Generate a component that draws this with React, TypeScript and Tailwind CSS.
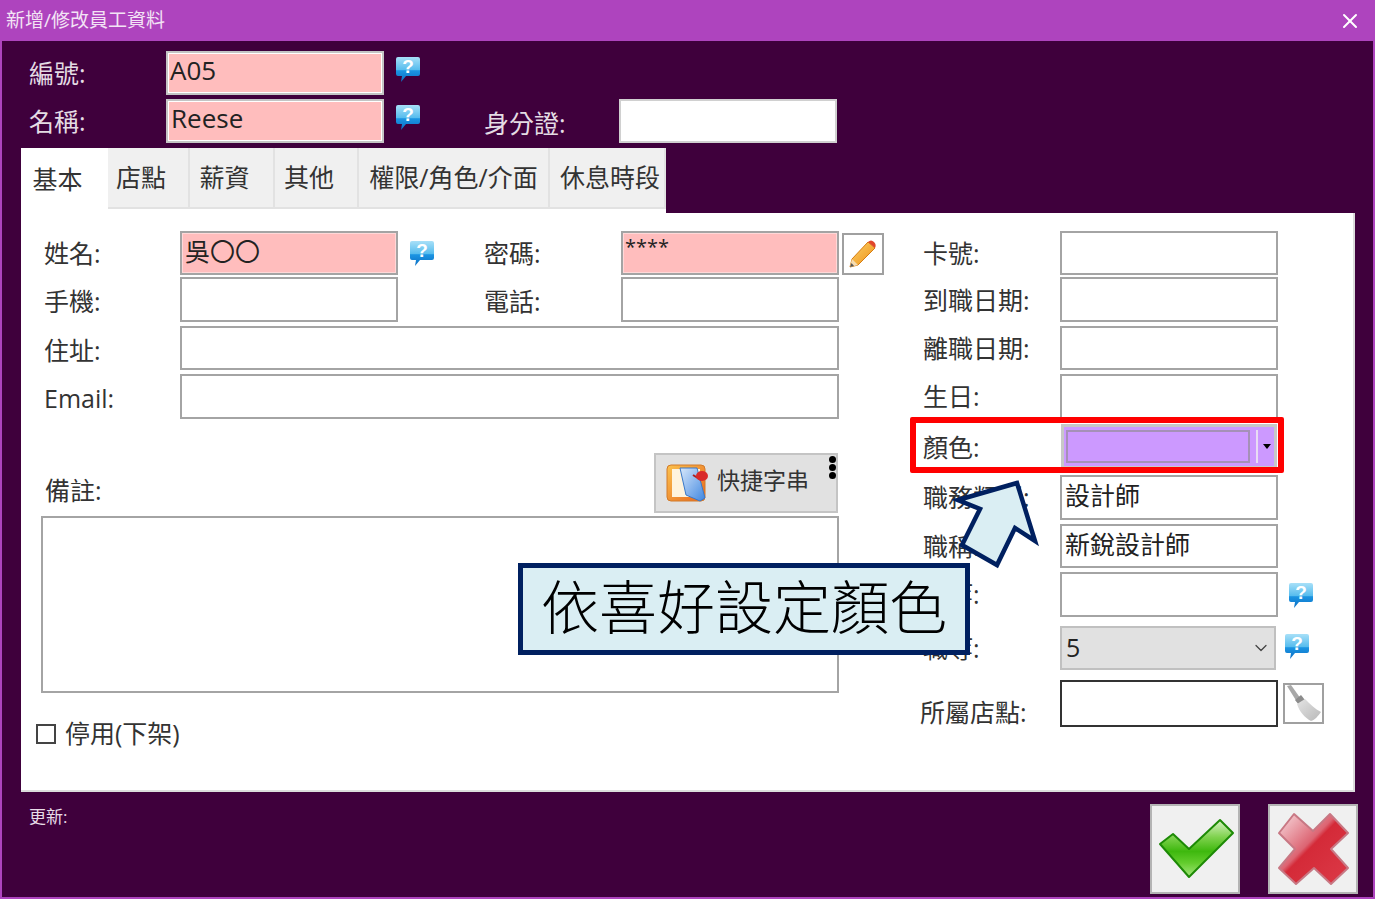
import { ChevronDown, X } from 'lucide-react'

const labelFont = "[font-family:'Open_Sans','Noto_Sans_CJK_TC',sans-serif]"

function HelpIcon({ id, className = '' }: { id: string; className?: string }) {
  return (
    <svg width="28" height="28" viewBox="0 0 28 28" className={`shrink-0 ${className}`}>
      <defs>
        <linearGradient id={id} x1="0" y1="0" x2="0" y2="1">
          <stop offset="0" stopColor="#a8e0f8" />
          <stop offset="0.5" stopColor="#58bdee" />
          <stop offset="0.55" stopColor="#1b94e2" />
          <stop offset="1" stopColor="#0b6fc4" />
        </linearGradient>
      </defs>
      <path d="M4 2h20a2 2 0 0 1 2 2v15a2 2 0 0 1-2 2H12l-5 6 1-6H4a2 2 0 0 1-2-2V4a2 2 0 0 1 2-2z" fill={`url(#${id})`} />
      <text x="14" y="18" textAnchor="middle" fontSize="19" fontWeight="700" fill="#fff" fontFamily="Liberation Sans">?</text>
    </svg>
  )
}

function Field({ value = '', pink, w = 'w-[218px]', dark }: { value?: string; pink?: boolean; w?: string; dark?: boolean }) {
  return (
    <div
      className={`${w} h-full shrink-0 flex items-center px-[3px] pb-[4px] border-2 text-[25px] leading-none text-[#222] ${
        dark ? 'border-[#333]' : 'border-[#a4a4a4]'
      } ${pink ? 'bg-[#ffbdbd] shadow-[inset_0_0_0_1px_#ffd8d8]' : 'bg-white'}`}
    >
      {value}
    </div>
  )
}

function FormLabel({ text, w }: { text: string; w: string }) {
  return <span className={`${w} shrink-0 text-[25px] leading-none text-[#333]`}>{text}</span>
}

function Tab({ text, w, active, shift }: { text: string; w: string; active?: boolean; shift?: string }) {
  return (
    <div
      className={`${w} ${shift ?? ''} flex items-center justify-center text-[25px] text-[#333] ${
        active ? 'h-[62px] mt-[2px] pb-[2px] bg-white' : 'h-[61px] bg-[#f0f0f0] border-r-2 border-b-2 border-[#e2e2e2]'
      }`}
    >
      {text}
    </div>
  )
}

function RightRow({ label, h, mb, lift, children }: { label: string; h: string; mb: string; lift?: string; children: React.ReactNode }) {
  return (
    <div className={`flex items-center ${h} ${mb}`}>
      <FormLabel text={label} w={`w-[137px] ${lift ?? ''}`} />
      {children}
    </div>
  )
}

export default function App() {
  return (
    <div className={`relative w-[1375px] h-[899px] overflow-hidden flex flex-col ${labelFont}`}>
      {/* 標題列 */}
      <header className="h-[41px] shrink-0 bg-[#ae44be] flex items-center justify-between pl-[6px] pr-[13px] text-[#f3e3f5] text-[19px]">
        <span>新增/修改員工資料</span>
        <X size={24} strokeWidth={2} className="text-white" />
      </header>

      <main className="flex-1 bg-[#3f003c] border-x-2 border-b-2 border-[#ae44be] pt-[10px] flex flex-col">
        {/* 編號 / 名稱 */}
        <div className="pl-[27px] flex items-center h-[44px] mb-[4px]">
          <span className="w-[137px] text-[25px] leading-none text-[#e4dce4]">編號:</span>
          <div className="w-[218px] h-full border-2 border-[#c4c4c4] shadow-[inset_0_0_0_1px_#fff] bg-[#ffbdbd] px-[2px] pb-[6px] flex items-center text-[26px] text-[#222]">A05</div>
          <HelpIcon id="h1" className="ml-[10px] -mt-[8px]" />
        </div>
        <div className="pl-[27px] flex items-center h-[44px] mb-[5px]">
          <span className="w-[137px] text-[25px] leading-none text-[#e4dce4]">名稱:</span>
          <div className="w-[218px] h-full border-2 border-[#c4c4c4] shadow-[inset_0_0_0_1px_#fff] bg-[#ffbdbd] px-[3px] pb-[6px] flex items-center text-[26px] text-[#222]">Reese</div>
          <HelpIcon id="h2" className="ml-[10px] -mt-[8px]" />
          <span className="ml-[62px] mt-[4px] w-[135px] text-[25px] leading-none text-[#e4dce4]">身分證:</span>
          <div className="w-[218px] h-full border-2 border-[#d0d0d0] bg-white" />
        </div>

        {/* 分頁 */}
        <div className="ml-[19px] w-[645px] h-[65px] shrink-0 bg-white flex items-start">
          <Tab text="基本" w="w-[87px]" shift="pr-[14px]" active />
          <Tab text="店點" w="w-[82px]" shift="pr-[14px]" />
          <Tab text="薪資" w="w-[85px]" shift="pr-[14px]" />
          <Tab text="其他" w="w-[84px]" shift="pr-[14px]" />
          <Tab text="權限/角色/介面" w="w-[191px]" />
          <Tab text="休息時段" w="w-[116px]" shift="pl-[6px]" />
        </div>

        {/* 基本頁內容 */}
        <section className="ml-[19px] w-[1334px] h-[579px] shrink-0 bg-white border-r-2 border-b-2 border-[#dcdcdc] pt-[18px] flex">
          <div className="w-[899px] shrink-0 flex flex-col">
            <div className="pl-[23px] flex items-center h-[44px] mb-[2px]">
              <FormLabel text="姓名:" w="w-[136px]" />
              <Field value="吳〇〇" pink />
              <HelpIcon id="h3" className="ml-[10px]" />
              <FormLabel text="密碼:" w="ml-[48px] w-[137px]" />
              <div className="w-[218px] h-full border-2 border-[#a4a4a4] shadow-[inset_0_0_0_1px_#ffd8d8] bg-[#ffbdbd] pl-[2px] pt-[2px] text-[20px] leading-[24px] text-[#222]">****</div>
              <button className="ml-[3px] mt-[2px] w-[42px] h-[42px] border-2 border-[#a0a0a0] bg-white flex items-center justify-center">
                <svg width="30" height="30" viewBox="0 0 30 30">
                  <defs>
                    <linearGradient id="pen" x1="0" y1="0" x2="1" y2="1">
                      <stop offset="0" stopColor="#fbd26a" />
                      <stop offset="1" stopColor="#ef8f14" />
                    </linearGradient>
                  </defs>
                  <path d="M20 3l7 6L10 26l-8 2 2-8z" fill="url(#pen)" stroke="#d67c10" strokeWidth="1" />
                  <path d="M20 3c2-2 4-2 6 0s2 4 1 6z" fill="#e0452a" />
                  <path d="M4 20l6 6-8 2z" fill="#f6dcb0" />
                  <path d="M2 28l1.500-4 2.500 3z" fill="#555" />
                </svg>
              </button>
            </div>
            <div className="pl-[23px] flex items-center h-[45px] mb-[4px]">
              <FormLabel text="手機:" w="w-[136px] mt-[4px]" />
              <Field />
              <FormLabel text="電話:" w="ml-[86px] w-[137px] mt-[4px]" />
              <Field />
            </div>
            <div className="pl-[23px] flex items-center h-[44px] mb-[4px]">
              <FormLabel text="住址:" w="w-[136px] mt-[4px]" />
              <Field w="w-[659px]" />
            </div>
            <div className="pl-[23px] flex items-center h-[45px]">
              <FormLabel text="Email:" w="w-[136px] mt-[4px]" />
              <Field w="w-[659px]" />
            </div>

            <div className="pl-[24px] mt-[34px] flex items-end h-[60px] w-[817px] justify-between">
              <span className="text-[25px] leading-none text-[#333] mb-[10px]">備註:</span>
              <button className="relative w-[184px] h-full bg-[#e1e1e1] border-2 border-[#c4c4c4] flex items-center pl-[10px] gap-[7px] pb-[6px] text-[23px] text-[#333]">
                <svg width="44" height="40" viewBox="0 0 44 40" className="shrink-0 mt-[6px]">
                  <defs>
                    <linearGradient id="frame" x1="0" y1="0" x2="1" y2="1">
                      <stop offset="0" stopColor="#fbc24e" />
                      <stop offset="1" stopColor="#e8661c" />
                    </linearGradient>
                    <linearGradient id="paper" x1="0" y1="0" x2="1" y2="1">
                      <stop offset="0" stopColor="#d8e8fb" />
                      <stop offset="1" stopColor="#3f86e0" />
                    </linearGradient>
                  </defs>
                  <rect x="1" y="2" width="38" height="36" rx="4" fill="url(#frame)" stroke="#d27a2a" />
                  <rect x="6" y="6" width="28" height="28" fill="#fff3dc" />
                  <path d="M14 5h17l8 30-5 3-14-6z" fill="url(#paper)" stroke="#3a78c8" />
                  <path d="M27 12l8 5" stroke="#b02020" strokeWidth="2" />
                  <ellipse cx="36" cy="13" rx="6" ry="5" fill="#d92a2a" />
                </svg>
                快捷字串
                <span className="absolute right-[0px] top-[1px] flex flex-col gap-[1px]">
                  <i className="block w-[7px] h-[7px] rounded-full bg-black" />
                  <i className="block w-[7px] h-[7px] rounded-full bg-black" />
                  <i className="block w-[7px] h-[7px] rounded-full bg-black" />
                </span>
              </button>
            </div>
            <div className="ml-[20px] mt-[3px] w-[798px] h-[177px] border-2 border-[#a4a4a4] bg-white" />
            <label className="ml-[15px] mt-[28px] flex items-center gap-[9px] text-[25px] leading-none text-[#333]">
              <span className="w-[20px] h-[20px] border-2 border-[#444] bg-white" />
              停用(下架)
            </label>
          </div>

          <div className="pl-[3px] flex flex-col">
            <RightRow label="卡號:" h="h-[44px]" mb="mb-[2px]"><Field /></RightRow>
            <RightRow label="到職日期:" h="h-[45px]" mb="mb-[4px]" lift="mt-[2px]"><Field /></RightRow>
            <RightRow label="離職日期:" h="h-[44px]" mb="mb-[4px]"><Field /></RightRow>
            <RightRow label="生日:" h="h-[45px]" mb="mb-[5px]"><Field /></RightRow>
            <RightRow label="顏色:" h="h-[45px]" mb="mb-[6px]" lift="mt-[2px]">
              <div className="ml-[1px] w-[216px] h-full border-[3px] border-[#c8c8c8] bg-[#cc99ff] flex items-center pl-[2px] pr-[2px]">
                <div className="w-[184px] h-[33px] border-2 border-[#a590b8]" />
                <div className="ml-[6px] w-[2px] h-[33px] bg-[#e8dcf4]" />
                <div className="ml-[5px] w-0 h-0 border-x-[4px] border-t-[5px] border-x-transparent border-t-black" />
              </div>
            </RightRow>
            <RightRow label="職務類別:" h="h-[45px]" mb="mb-[4px]"><Field value="設計師" /></RightRow>
            <RightRow label="職稱:" h="h-[44px]" mb="mb-[4px]"><Field value="新銳設計師" /></RightRow>
            <RightRow label="薪等:" h="h-[45px]" mb="mb-[9px]">
              <Field />
              <HelpIcon id="h4" className="ml-[9px]" />
            </RightRow>
            <RightRow label="職等:" h="h-[44px]" mb="mb-[10px]">
              <div className="w-[216px] h-full border-2 border-[#c0c0c0] bg-[#e1e1e1] flex items-center justify-between pl-[4px] pr-[3px] text-[25px] text-[#222]">
                5
                <ChevronDown size={20} strokeWidth={1.5} className="text-[#444]" />
              </div>
              <HelpIcon id="h5" className="ml-[7px] -mt-[4px]" />
            </RightRow>
            <div className="flex items-center h-[47px]">
              <span className="w-[137px] -ml-[3px] mr-[3px] pt-[17px] shrink-0 text-[25px] leading-none text-[#333]">所屬店點:</span>
              <Field dark />
              <button className="ml-[5px] w-[41px] h-[41px] border-2 border-[#a0a0a0] bg-white flex items-center justify-center">
                <svg width="37" height="37" viewBox="0 0 37 37">
                  <defs>
                    <linearGradient id="broom" x1="0" y1="0" x2="1" y2="1">
                      <stop offset="0" stopColor="#e4e4e4" />
                      <stop offset="1" stopColor="#b8b8b8" />
                    </linearGradient>
                  </defs>
                  <path d="M2 1l4-1 10 14-4 3z" fill="#a8a8a8" />
                  <path d="M10 15l6-5 4 5-6 5z" fill="#8c8c8c" />
                  <path d="M12 19l8-5c5 5 10 10 16 13-3 4-6 8-10 9-6-3-12-10-14-17z" fill="url(#broom)" />
                </svg>
              </button>
            </div>
          </div>
        </section>

        {/* 底部 */}
        <div className="flex-1 flex pl-[27px] pt-[12px] pr-[15px]">
          <span className="text-[17px] leading-[26px] text-[#e8dce8]">更新:</span>
          <button className="ml-auto w-[90px] h-[90px] bg-[#f0f0f0] border-2 border-[#b4b4b4]">
            <svg width="86" height="86" viewBox="0 0 86 86">
              <defs>
                <linearGradient id="ok" x1="0" y1="0" x2="0" y2="1">
                  <stop offset="0" stopColor="#d8f2c4" />
                  <stop offset="0.3" stopColor="#7fd24e" />
                  <stop offset="0.55" stopColor="#3eb80e" />
                  <stop offset="0.75" stopColor="#62cc2c" />
                  <stop offset="1" stopColor="#a4e67c" />
                </linearGradient>
              </defs>
              <path d="M8 38l13-10 16 15 31-29 13 13-44 44z" fill="url(#ok)" stroke="#1d8a06" strokeWidth="2" strokeLinejoin="round" />
            </svg>
          </button>
          <button className="ml-[28px] w-[90px] h-[90px] bg-[#f0f0f0] border-2 border-[#b4b4b4]">
            <svg width="86" height="86" viewBox="0 0 86 86">
              <defs>
                <linearGradient id="no" x1="0" y1="0" x2="1" y2="1">
                  <stop offset="0" stopColor="#f8dce0" />
                  <stop offset="0.42" stopColor="#dc6472" />
                  <stop offset="0.47" stopColor="#d42a38" />
                  <stop offset="1" stopColor="#dc3a48" />
                </linearGradient>
              </defs>
              <path d="M24 8l19 17 17-17 18 19-17 16 17 19-17 16-17-16-18 16-17-16 16-19-16-16z" fill="url(#no)" stroke="#c87884" strokeWidth="2" strokeLinejoin="round" />
            </svg>
          </button>
        </div>
      </main>

      {/* 教學標註 */}
      <div className="absolute left-[910px] top-[417px] w-[374px] h-[56px] border-[6px] border-[#ff0000] rounded-[2px]" />
      <svg className="absolute left-[950px] top-[475px]" width="95" height="100" viewBox="950 475 95 100">
        <path d="M958 500l59-17 18 58-20-13-18 37-35-20 18-36z" fill="#daeef3" stroke="#002060" strokeWidth="4.500" />
      </svg>
      <div className="absolute left-[518px] top-[563px] w-[452px] h-[92px] border-[5px] border-[#002060] bg-[#daeef3] flex items-center justify-center pb-[4px] text-[58px] font-light leading-none text-black">
        依喜好設定顏色
      </div>
    </div>
  )
}
